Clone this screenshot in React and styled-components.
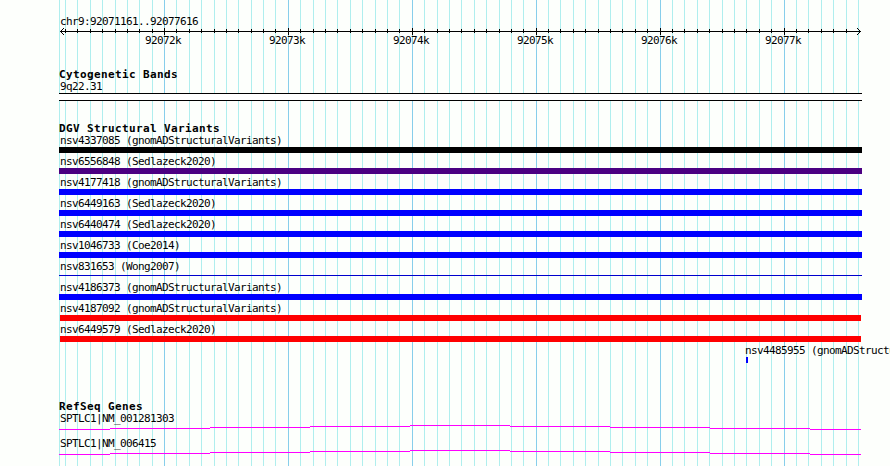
import React from "react";
import styled, { createGlobalStyle } from "styled-components";

const GlobalStyle = createGlobalStyle`
  body {
    margin: 0;
    background: #fdfffc;
  }
`;

const Browser = styled.main`
  position: relative;
  box-sizing: border-box;
  width: 890px;
  height: 466px;
  padding: 15px 0 0 59px;
  overflow: hidden;
  background: #fdfffc;
  color: #000;
`;
const Grid = styled.svg`
  position: absolute;
  top: 0;
  left: 0;
`;
const Content = styled.div`
  position: relative;
  display: flex;
  flex-direction: column;
`;
const Label = styled.div`
  height: 12px;
  padding-left: ${(props) => props.$indent ?? 1}px;
  font: 11px/14px "DejaVu Sans Mono", monospace;
  letter-spacing: -0.622px;
  white-space: pre;
`;
const ScaleLabel = styled(Label)`
  padding-left: 0;
  line-height: 10px;
`;
const Axis = styled.svg`
  display: block;
  margin-top: 1px;
`;
const Scale = styled.div`
  display: grid;
  grid-template-columns: repeat(6, 124px);
  padding-left: 86px;
`;
const Track = styled.section`
  margin-top: ${(props) => props.$gap}px;
`;
const Title = styled.h2`
  height: 12px;
  margin: 0;
  font: bold 11px/14px "DejaVu Sans Mono", monospace;
  letter-spacing: 0.378px;
  white-space: pre;
`;
const Band = styled.div`
  box-sizing: border-box;
  width: 803px;
  height: 8px;
  margin-top: 1px;
  border: solid #000;
  border-width: 1px 0;
  background: #fff;
`;
const Variant = styled.div`
  display: flex;
  flex-direction: column;
  height: 21px;
`;
const Bar = styled.div`
  width: ${(props) => props.$width}px;
  height: ${(props) => (props.$thin ? 1 : 6)}px;
  margin-top: ${(props) => (props.$thin ? 3 : 1)}px;
  margin-left: ${(props) => props.$start}px;
  background: ${(props) => props.$color};
`;
const Gene = styled.div`
  height: 25px;
`;
const Intron = styled.svg`
  display: block;
  margin-top: 1px;
`;

const gridLines = [
  59, 65, 77, 90, 102, 115, 127, 139, 152, 164, 176, 189, 201, 214, 226, 238,
  251, 263, 275, 288, 300, 313, 325, 337, 350, 362, 375, 387, 399, 412, 424,
  437, 449, 461, 474, 486, 499, 511, 523, 536, 548, 560, 573, 585, 598, 610,
  622, 635, 647, 660, 672, 684, 697, 709, 722, 734, 746, 759, 771, 784, 796,
  808, 821, 833, 846, 858,
];
const majorLines = [164, 288, 412, 536, 660, 784];
const scale = ["92072k", "92073k", "92074k", "92075k", "92076k", "92077k"];

const variants = [
  { name: "nsv4337085 (gnomADStructuralVariants)", color: "#000" },
  { name: "nsv6556848 (Sedlazeck2020)", color: "#4b0082" },
  { name: "nsv4177418 (gnomADStructuralVariants)", color: "#00f" },
  { name: "nsv6449163 (Sedlazeck2020)", color: "#00f" },
  { name: "nsv6440474 (Sedlazeck2020)", color: "#00f" },
  { name: "nsv1046733 (Coe2014)", color: "#00f" },
  { name: "nsv831653 (Wong2007)", color: "#0000cd", thin: true },
  { name: "nsv4186373 (gnomADStructuralVariants)", color: "#00f" },
  {
    name: "nsv4187092 (gnomADStructuralVariants)",
    color: "#f00",
    start: 1,
    width: 801,
  },
  { name: "nsv6449579 (Sedlazeck2020)", color: "#f00", start: 1, width: 801 },
  {
    name: "nsv4485955 (gnomADStructuralVariants)",
    color: "#00f",
    start: 687,
    width: 2,
    indent: 686,
  },
];
const genes = ["SPTLC1|NM_001281303", "SPTLC1|NM_006415"];

const GridLines = () => (
  <Grid width="890" height="466" shapeRendering="crispEdges">
    {gridLines.map((x) => (
      <rect
        key={x}
        x={x}
        width="1"
        height="466"
        fill={majorLines.includes(x) ? "#87ceeb" : "#afeeee"}
      />
    ))}
  </Grid>
);

const Ruler = () => (
  <Axis width="803" height="8" viewBox="59 28 803 8" shapeRendering="crispEdges">
    <rect x="60" y="31" width="801" height="1" />
    {gridLines.slice(1, -1).map((x) =>
      majorLines.includes(x) ? (
        <rect key={x} x={x} y="28" width="1" height="7" />
      ) : (
        <rect key={x} x={x} y="29" width="1" height="4" />
      )
    )}
    {[1, 2, 3].map((d) => (
      <React.Fragment key={d}>
        <rect x={60 + d} y={31 - d} width="1" height="1" />
        <rect x={60 + d} y={31 + d} width="1" height="1" />
        <rect x={860 - d} y={31 - d} width="1" height="1" />
        <rect x={860 - d} y={31 + d} width="1" height="1" />
      </React.Fragment>
    ))}
  </Axis>
);

// the intron rises one pixel per step up to the middle of the view
const IntronLine = () => (
  <Intron width="802" height="5" shapeRendering="crispEdges" fill="#f0f">
    <rect x="0" y="4" width="51" height="1" />
    <rect x="51" y="3" width="100" height="1" />
    <rect x="151" y="2" width="100" height="1" />
    <rect x="251" y="1" width="100" height="1" />
    <rect x="351" y="0" width="100" height="1" />
    <rect x="451" y="1" width="100" height="1" />
    <rect x="551" y="2" width="100" height="1" />
    <rect x="651" y="3" width="100" height="1" />
    <rect x="751" y="4" width="51" height="1" />
  </Intron>
);

const App = () => {
  return (
    <>
      <GlobalStyle />
      <Browser>
        <GridLines />
        <Content>
          <Label>chr9:92071161..92077616</Label>
          <Ruler />
          <Scale>
            {scale.map((text) => (
              <ScaleLabel key={text}>{text}</ScaleLabel>
            ))}
          </Scale>
          <Track $gap={20}>
            <Title>Cytogenetic Bands</Title>
            <Label>9q22.31</Label>
            <Band />
          </Track>
          <Track $gap={21}>
            <Title>DGV Structural Variants</Title>
            {variants.map((variant) => (
              <Variant key={variant.name}>
                <Label $indent={variant.indent}>{variant.name}</Label>
                <Bar
                  $color={variant.color}
                  $start={variant.start ?? 0}
                  $width={variant.width ?? 803}
                  $thin={variant.thin}
                />
              </Variant>
            ))}
          </Track>
          <Track $gap={35}>
            <Title>RefSeq Genes</Title>
            {genes.map((gene) => (
              <Gene key={gene}>
                <Label>{gene}</Label>
                <IntronLine />
              </Gene>
            ))}
          </Track>
        </Content>
      </Browser>
    </>
  );
};

export default App;
